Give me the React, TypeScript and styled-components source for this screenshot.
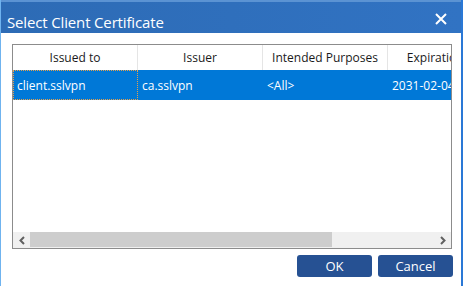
import React from 'react';
import styled, { createGlobalStyle } from 'styled-components';

const GlobalStyle = createGlobalStyle`
  html, body {
    margin: 0;
    padding: 0;
    background: #ffffff;
  }
  body {
    font-family: "Open Sans", "Noto Sans", sans-serif;
  }
`;

const columns = ['Issued to', 'Issuer', 'Intended Purposes', 'Expiration Date'];
const rows = [
  { cells: ['client.sslvpn', 'ca.sslvpn', '<All>', '2031-02-04'], selected: true },
];

const Page = styled.div`
  width: 465px;
  height: 286px;
  display: flex;
  background: #ffffff;
  overflow: hidden;
`;

const Window = styled.div`
  width: 460px;
  height: 286px;
  display: flex;
  flex-direction: column;
  border-left: 1px solid #6fb3ef;
  border-right: 2px solid #2a78d6;
  background: #ffffff;
`;

const TitleBar = styled.div`
  height: 31px;
  border-top: 2px solid #5b93d3;
  background: linear-gradient(to right, #2d6bb5, #3173c3);
  display: flex;
  align-items: center;
  justify-content: space-between;
  padding: 0 12px 0 6px;
  color: #ffffff;
`;

const Title = styled.div`
  font-size: 15px;
  padding-top: 9px;
  letter-spacing: -0.15px;
`;

const CloseButton = styled.button`
  width: 16px;
  height: 16px;
  padding: 0;
  border: none;
  background: transparent;
  display: flex;
  align-items: center;
  justify-content: center;
  margin-top: 2px;
`;

const Body = styled.div`
  flex: 1;
  display: flex;
  flex-direction: column;
  padding: 11px 8px 0 11px;
`;

const Table = styled.div`
  width: 438px;
  height: 203px;
  border: 1px solid #8c8c8c;
  display: flex;
  flex-direction: column;
  overflow: hidden;
`;

const Rows = styled.div`
  flex: 1;
  overflow: hidden;
`;

const HeaderRow = styled.div`
  display: flex;
  height: 25px;
  width: 500px;
`;

const HeaderCell = styled.div`
  width: 125px;
  flex-shrink: 0;
  box-sizing: border-box;
  border-right: 1px solid #e5e5e5;
  display: flex;
  align-items: center;
  justify-content: center;
  font-size: 12px;
  color: #1a1a1a;
  white-space: nowrap;
  overflow: hidden;
`;

const DataRow = styled.div<{ $selected?: boolean }>`
  display: flex;
  height: 30px;
  width: 500px;
  background: ${(p) => (p.$selected ? '#0078d7' : 'transparent')};
  color: ${(p) => (p.$selected ? '#ffffff' : '#1a1a1a')};
`;

const DataCell = styled.div<{ $focused?: boolean }>`
  width: 125px;
  flex-shrink: 0;
  box-sizing: border-box;
  display: flex;
  align-items: center;
  padding-left: 3px;
  font-size: 12px;
  white-space: nowrap;
  overflow: hidden;
  border: 1px dotted ${(p) => (p.$focused ? '#e8a04a' : 'transparent')};
`;

const ScrollBar = styled.div`
  height: 16px;
  display: flex;
  background: #f0f0f0;
`;

const ArrowBox = styled.div`
  width: 17px;
  height: 16px;
  display: flex;
  align-items: center;
  justify-content: center;
  background: #f0f0f0;
`;

const Track = styled.div`
  flex: 1;
  display: flex;
`;

const Thumb = styled.div`
  width: 302px;
  height: 15px;
  background: #cdcdcd;
`;

const Footer = styled.div`
  display: flex;
  justify-content: flex-end;
  gap: 6px;
  padding-top: 6px;
`;

const Button = styled.button`
  width: 75px;
  height: 22px;
  border: none;
  border-radius: 3px;
  background: #265193;
  color: #ffffff;
  font-family: "Open Sans", "Noto Sans", sans-serif;
  font-size: 13px;
  padding: 0;
  display: flex;
  align-items: center;
  justify-content: center;
`;

const Chevron = ({ dir }: { dir: 'left' | 'right' }) => (
  <svg width="8" height="9" viewBox="0 0 8 9">
    <path
      d={dir === 'left' ? 'M6 1 L2.5 4.5 L6 8' : 'M2 1 L5.5 4.5 L2 8'}
      stroke="#606060"
      strokeWidth="2"
      fill="none"
    />
  </svg>
);

export default function App() {
  return (
    <>
      <GlobalStyle />
      <Page>
        <Window>
          <TitleBar>
            <Title>Select Client Certificate</Title>
            <CloseButton>
              <svg width="12" height="12" viewBox="0 0 12 12">
                <path d="M1 1 L11 11 M11 1 L1 11" stroke="#ffffff" strokeWidth="2" />
              </svg>
            </CloseButton>
          </TitleBar>
          <Body>
            <Table>
              <Rows>
                <HeaderRow>
                  {columns.map((c) => (
                    <HeaderCell key={c}>{c}</HeaderCell>
                  ))}
                </HeaderRow>
                {rows.map((r, i) => (
                  <DataRow key={i} $selected={r.selected}>
                    {r.cells.map((c, j) => (
                      <DataCell key={j} $focused={r.selected && j === 0}>
                        {c}
                      </DataCell>
                    ))}
                  </DataRow>
                ))}
              </Rows>
              <ScrollBar>
                <ArrowBox>
                  <Chevron dir="left" />
                </ArrowBox>
                <Track>
                  <Thumb />
                </Track>
                <ArrowBox>
                  <Chevron dir="right" />
                </ArrowBox>
              </ScrollBar>
            </Table>
            <Footer>
              <Button>OK</Button>
              <Button>Cancel</Button>
            </Footer>
          </Body>
        </Window>
      </Page>
    </>
  );
}
